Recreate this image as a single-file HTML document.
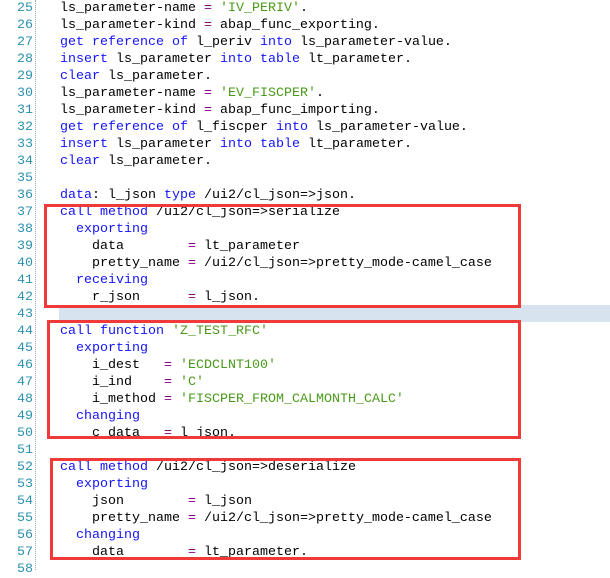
<!DOCTYPE html>
<html><head><style>
body{margin:0;width:610px;height:570px;background:#fff;position:relative;overflow:hidden;font-family:"Liberation Mono",monospace;font-size:13.33px}
.w{position:absolute;left:0;top:2px;width:610px;height:570px}
.l{position:absolute;left:0;height:17px;line-height:17px;white-space:pre;width:610px}
.n{position:absolute;left:0;width:33px;text-align:right;color:#2b91af}
.c{position:absolute;left:60px;color:#000}
.k{color:#1414ff}.s{color:#4a9a1a}.o{color:#800080}
.dots{position:absolute;left:35px;top:0;height:570px;border-left:1px dotted #9ab}
.box{position:absolute;border:3px solid #f03a3a;box-sizing:border-box}
.hl{position:absolute;left:59px;top:305px;width:551px;height:17px;background:#d8e3f0}
</style></head><body>
<div class="hl"></div>
<div class="dots"></div>
<div class="w">
<div class="l" style="top:-2px"><span class="n">25</span><span class="c">ls_parameter-name <span class="o">=</span> <span class="s">'IV_PERIV'</span>.</span></div>
<div class="l" style="top:15px"><span class="n">26</span><span class="c">ls_parameter-kind <span class="o">=</span> abap_func_exporting.</span></div>
<div class="l" style="top:32px"><span class="n">27</span><span class="c"><span class="k">get reference of</span> l_periv <span class="k">into</span> ls_parameter-value.</span></div>
<div class="l" style="top:49px"><span class="n">28</span><span class="c"><span class="k">insert</span> ls_parameter <span class="k">into table</span> lt_parameter.</span></div>
<div class="l" style="top:66px"><span class="n">29</span><span class="c"><span class="k">clear</span> ls_parameter.</span></div>
<div class="l" style="top:83px"><span class="n">30</span><span class="c">ls_parameter-name <span class="o">=</span> <span class="s">'EV_FISCPER'</span>.</span></div>
<div class="l" style="top:100px"><span class="n">31</span><span class="c">ls_parameter-kind <span class="o">=</span> abap_func_importing.</span></div>
<div class="l" style="top:117px"><span class="n">32</span><span class="c"><span class="k">get reference of</span> l_fiscper <span class="k">into</span> ls_parameter-value.</span></div>
<div class="l" style="top:134px"><span class="n">33</span><span class="c"><span class="k">insert</span> ls_parameter <span class="k">into table</span> lt_parameter.</span></div>
<div class="l" style="top:151px"><span class="n">34</span><span class="c"><span class="k">clear</span> ls_parameter.</span></div>
<div class="l" style="top:168px"><span class="n">35</span></div>
<div class="l" style="top:185px"><span class="n">36</span><span class="c"><span class="k">data</span>: l_json <span class="k">type</span> /ui2/cl_json=&gt;json.</span></div>
<div class="l" style="top:202px"><span class="n">37</span><span class="c"><span class="k">call method</span> /ui2/cl_json=&gt;serialize</span></div>
<div class="l" style="top:219px"><span class="n">38</span><span class="c">  <span class="k">exporting</span></span></div>
<div class="l" style="top:236px"><span class="n">39</span><span class="c">    data        <span class="o">=</span> lt_parameter</span></div>
<div class="l" style="top:253px"><span class="n">40</span><span class="c">    pretty_name <span class="o">=</span> /ui2/cl_json=&gt;pretty_mode-camel_case</span></div>
<div class="l" style="top:270px"><span class="n">41</span><span class="c">  <span class="k">receiving</span></span></div>
<div class="l" style="top:287px"><span class="n">42</span><span class="c">    r_json      <span class="o">=</span> l_json.</span></div>
<div class="l" style="top:304px"><span class="n">43</span></div>
<div class="l" style="top:321px"><span class="n">44</span><span class="c"><span class="k">call function</span> <span class="s">'Z_TEST_RFC'</span></span></div>
<div class="l" style="top:338px"><span class="n">45</span><span class="c">  <span class="k">exporting</span></span></div>
<div class="l" style="top:355px"><span class="n">46</span><span class="c">    i_dest   <span class="o">=</span> <span class="s">'ECDCLNT100'</span></span></div>
<div class="l" style="top:372px"><span class="n">47</span><span class="c">    i_ind    <span class="o">=</span> <span class="s">'C'</span></span></div>
<div class="l" style="top:389px"><span class="n">48</span><span class="c">    i_method <span class="o">=</span> <span class="s">'FISCPER_FROM_CALMONTH_CALC'</span></span></div>
<div class="l" style="top:406px"><span class="n">49</span><span class="c">  <span class="k">changing</span></span></div>
<div class="l" style="top:423px"><span class="n">50</span><span class="c">    c_data   <span class="o">=</span> l_json.</span></div>
<div class="l" style="top:440px"><span class="n">51</span></div>
<div class="l" style="top:457px"><span class="n">52</span><span class="c"><span class="k">call method</span> /ui2/cl_json=&gt;deserialize</span></div>
<div class="l" style="top:474px"><span class="n">53</span><span class="c">  <span class="k">exporting</span></span></div>
<div class="l" style="top:491px"><span class="n">54</span><span class="c">    json        <span class="o">=</span> l_json</span></div>
<div class="l" style="top:508px"><span class="n">55</span><span class="c">    pretty_name <span class="o">=</span> /ui2/cl_json=&gt;pretty_mode-camel_case</span></div>
<div class="l" style="top:525px"><span class="n">56</span><span class="c">  <span class="k">changing</span></span></div>
<div class="l" style="top:542px"><span class="n">57</span><span class="c">    data        <span class="o">=</span> lt_parameter.</span></div>
<div class="l" style="top:559px"><span class="n">58</span></div>
</div>
<div class="box" style="left:44px;top:204px;width:477px;height:104px"></div>
<div class="box" style="left:47px;top:320px;width:474px;height:119px"></div>
<div class="box" style="left:50px;top:458px;width:471px;height:102px"></div>
</body></html>
